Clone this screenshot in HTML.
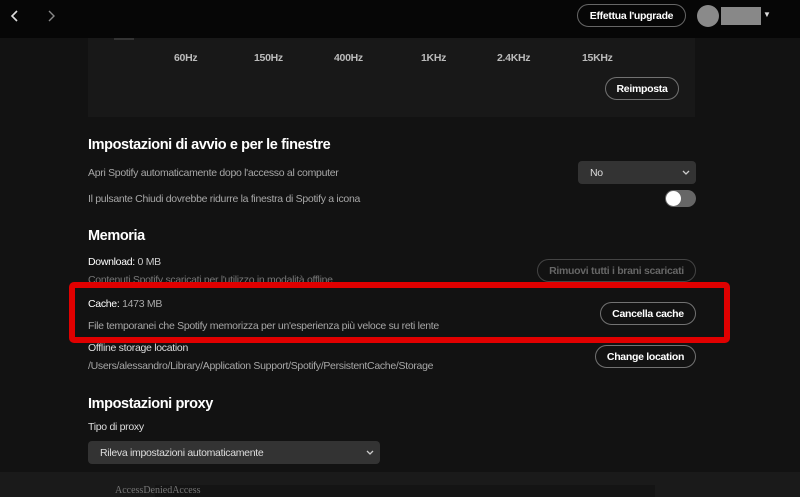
<!DOCTYPE html>
<html><head><meta charset="utf-8"><style>
*{margin:0;padding:0;box-sizing:border-box}
body{width:800px;height:497px;background:#121212;font-family:"Liberation Sans",sans-serif;color:#fff;position:relative;overflow:hidden}
.a{position:absolute;white-space:nowrap}
.s{font-size:10.5px;color:#a7a7a7;letter-spacing:-0.3px}
.h{font-size:14.5px;font-weight:bold;letter-spacing:-0.4px}
.btn{position:absolute;border:1px solid #727272;border-radius:14px;font-size:10.5px;font-weight:bold;letter-spacing:-0.3px;display:flex;align-items:center;justify-content:center;color:#fff}
.sel{position:absolute;background:#333;border-radius:4px;font-size:10.5px;color:#ddd;padding-left:12px;display:flex;align-items:center;letter-spacing:-0.3px}
.sel svg{position:absolute;right:6px;top:9px}
</style></head><body>
<div class="a" style="left:0;top:0;width:800px;height:38px;background:#060606"></div>
<svg class="a" style="left:10px;top:9px" width="10" height="14"><path d="M7 2 L2 7 L7 12" stroke="#ddd" stroke-width="1.6" fill="none"/></svg>
<svg class="a" style="left:46px;top:9px" width="10" height="14"><path d="M3 2 L8 7 L3 12" stroke="#888" stroke-width="1.4" fill="none"/></svg>
<div class="btn" style="left:577px;top:4px;width:109px;height:23px;border-color:#666;font-size:10.5px">Effettua l'upgrade</div>
<div class="a" style="left:697px;top:5px;width:22px;height:22px;border-radius:50%;background:#8a8a8a"></div>
<div class="a" style="left:721px;top:7px;width:40px;height:18px;background:#888"></div>
<div class="a" style="left:763px;top:10px;font-size:8px;color:#ddd">▼</div>

<div class="a" style="left:88px;top:38px;width:607px;height:79px;background:#181818"></div>
<div class="a" style="left:114px;top:38px;width:20px;height:2px;background:#333"></div>
<div class="a s" style="left:174px;top:52px;color:#bbb;font-weight:bold">60Hz</div>
<div class="a s" style="left:254px;top:52px;color:#bbb;font-weight:bold">150Hz</div>
<div class="a s" style="left:334px;top:52px;color:#bbb;font-weight:bold">400Hz</div>
<div class="a s" style="left:421px;top:52px;color:#bbb;font-weight:bold">1KHz</div>
<div class="a s" style="left:497px;top:52px;color:#bbb;font-weight:bold">2.4KHz</div>
<div class="a s" style="left:582px;top:52px;color:#bbb;font-weight:bold">15KHz</div>
<div class="btn" style="left:605px;top:77px;width:74px;height:23px">Reimposta</div>

<div class="a h" style="left:88px;top:137px">Impostazioni di avvio e per le finestre</div>
<div class="a s" style="left:88px;top:167px">Apri Spotify automaticamente dopo l'accesso al computer</div>
<div class="sel" style="left:578px;top:161px;width:118px;height:23px">No<svg width="8" height="6"><path d="M1 1 L4 4 L7 1" stroke="#ccc" stroke-width="1.3" fill="none"/></svg></div>
<div class="a s" style="left:88px;top:193px">Il pulsante Chiudi dovrebbe ridurre la finestra di Spotify a icona</div>
<div class="a" style="left:665px;top:190px;width:31px;height:17px;border-radius:9px;background:#666"></div>
<div class="a" style="left:666px;top:191px;width:15px;height:15px;border-radius:50%;background:#fff"></div>

<div class="a h" style="left:88px;top:228px">Memoria</div>
<div class="a s" style="left:88px;top:256px;color:#ccc"><span style="color:#fff">Download:</span> 0 MB</div>
<div class="a s" style="left:88px;top:274px;color:#777">Contenuti Spotify scaricati per l'utilizzo in modalità offline</div>
<div class="btn" style="left:537px;top:259px;width:159px;height:23px;border-color:#444;color:#666">Rimuovi tutti i brani scaricati</div>

<div class="a" style="left:69px;top:282px;width:661px;height:61px;border:6px solid #e00000;border-radius:5px;background:#121212"></div>
<div class="a s" style="left:88px;top:298px;color:#aaa"><span style="color:#fff">Cache:</span> 1473 MB</div>
<div class="a s" style="left:88px;top:320px">File temporanei che Spotify memorizza per un'esperienza più veloce su reti lente</div>
<div class="btn" style="left:600px;top:302px;width:96px;height:23px">Cancella cache</div>

<div class="a s" style="left:88px;top:342px;color:#ddd">Offline storage location</div>
<div class="a s" style="left:88px;top:360px">/Users/alessandro/Library/Application Support/Spotify/PersistentCache/Storage</div>
<div class="btn" style="left:595px;top:345px;width:101px;height:23px">Change location</div>

<div class="a h" style="left:88px;top:396px">Impostazioni proxy</div>
<div class="a s" style="left:88px;top:421px;color:#ddd">Tipo di proxy</div>
<div class="sel" style="left:88px;top:441px;width:292px;height:23px">Rileva impostazioni automaticamente<svg width="8" height="6"><path d="M1 1 L4 4 L7 1" stroke="#ccc" stroke-width="1.3" fill="none"/></svg></div>

<div class="a" style="left:0;top:472px;width:800px;height:25px;background:#1a1a1a"></div>
<div class="a" style="left:155px;top:485px;width:500px;height:12px;background:#141414"></div>
<div class="a" style="left:115px;top:485px;font-family:'Liberation Serif',serif;font-size:10px;color:#777">AccessDeniedAccess</div>
</body></html>
